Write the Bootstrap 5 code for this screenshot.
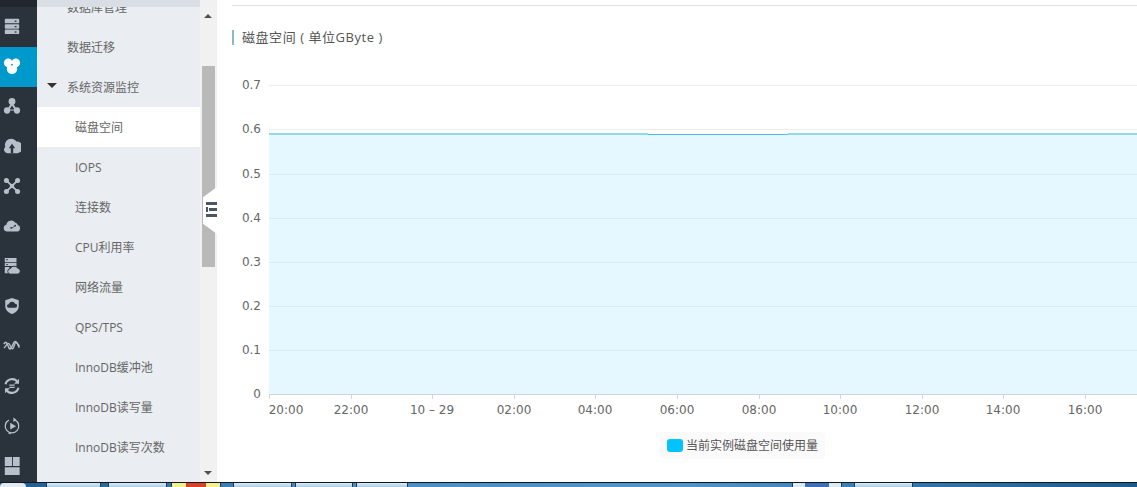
<!DOCTYPE html>
<html lang="zh-CN">
<head>
    <meta charset="UTF-8">
    <title>磁盘空间</title>
    <link href="https://cdn.jsdelivr.net/npm/bootstrap@5.3.0/dist/css/bootstrap.min.css" rel="stylesheet">
    <style>
        html, body { height: 487px; overflow: hidden; }
        body { font-family: "Open Sans", "Noto Sans CJK SC", sans-serif; font-size: 12px; color: #666; }
        .page-wrap { height: 482px; overflow: hidden; }
        .icon-rail { width: 37px; background: #2a323c; color: #b6bfca; }
        .rail-top { height: 7px; background: #22272e; }
        .rail-item { height: 40px; padding: 0 0 2px 3px; }
        .rail-item.is-on { background: #0099cc; color: #fff; }
        .rail-item svg { width: 18px; height: 18px; fill: currentColor; }
        .side-menu { width: 163px; background: #eaedf1; }
        .side-top { height: 7px; background: #d9dee4; }
        .side-scroll { height: 475px; overflow: hidden; }
        .side-list { margin-top: -20px; }
        .side-row { height: 40px; line-height: 42px; padding-left: 38px; white-space: nowrap; position: relative; }
        .side-row.is-group { padding-left: 30px; }
        .side-row.is-on { background: #fff; }
        .tree-arrow { position: absolute; left: 10px; top: 16px; width: 0; height: 0; border: 5px solid transparent; border-top: 5px solid #333; border-bottom: 0; }
        .fake-scroll { width: 17px; background: #f1f1f1; position: relative; }
        .scroll-thumb { position: absolute; left: 2px; top: 66px; width: 13px; height: 201px; background: #b9b9b9; }
        .scroll-up, .scroll-down { position: absolute; left: 4px; width: 0; height: 0; border: 4px solid transparent; }
        .scroll-up { top: 14px; border-top: 0; border-bottom: 4px solid #505050; }
        .scroll-down { top: 471px; border-bottom: 0; border-top: 4px solid #505050; }
        .side-toggle { position: absolute; left: 3px; top: 187px; width: 14px; height: 47px; background: #fff; clip-path: polygon(100% 0, 100% 100%, 0 78%, 0 22%); }
        .toggle-bars { position: absolute; left: 3px; top: 15px; width: 11px; height: 15px; fill: #4d5666; }
        .main-pane { min-width: 0; overflow: hidden; }
        .top-rule { margin: 5px 0 0 15px; height: 1px; background: #e2e2e2; }
        .pane-title { margin: 24px 0 0 15px; padding-left: 8px; height: 15px; line-height: 15px; border-left: 2px solid #8db6d3; font-size: 13px; letter-spacing: .55px; color: #555; white-space: nowrap; }
        .chart-svg { display: block; width: 920px; height: 387px; margin-top: 0; }
        .chart-svg text { font-family: "DejaVu Sans", sans-serif; font-size: 12px; fill: #666; }
        .legend-box { width: 165px; height: 27px; margin: 0 0 0 443px; background: #fafafa; border-radius: 4px; padding-left: 7px; color: #555; white-space: nowrap; }
        .legend-dot { width: 16px; height: 13px; background: #00c3ff; border-radius: 3px; margin-right: 3px; }
        .task-bar { height: 5px; display: grid; grid-template-columns: 46px 55px 7px 59px 4px 50px 12px 59px 3px 58px 3px 52px 384px 50px 12px 59px 1fr; border-top: 1px solid #10181f; background: linear-gradient(90deg, #1f5d8c, #4a8fc4 30%, #4f95cb 60%, #1d5a8c); }
        .task-orb { width: 26px; height: 4px; background: #dfeaf2; border-radius: 13px 13px 0 0; }
        .task-btn { background: linear-gradient(#dcecf6, #a9cde4); border: 1px solid #1e3c55; border-width: 0 1px; }
        .task-btn.is-warm { background: linear-gradient(90deg, #f7ef8a 30%, #d8402a 30%, #d8402a 70%, #f7ef8a 70%); }
        .task-btn.is-blue { background: linear-gradient(90deg, #dcecf6 25%, #3f6fb5 25%, #3f6fb5 75%, #dcecf6 75%); }
    </style>
</head>
<body>
    <div class="page-wrap d-flex">
        <!-- icon column -->
        <div class="icon-rail flex-shrink-0">
            <div class="rail-top"></div>
            <div class="rail-item d-flex align-items-center">
                <svg viewBox="0 0 20 20"><path d="M3 2h14a1 1 0 0 1 1 1v3a1 1 0 0 1-1 1H3a1 1 0 0 1-1-1V3a1 1 0 0 1 1-1zm0 6h14a1 1 0 0 1 1 1v3a1 1 0 0 1-1 1H3a1 1 0 0 1-1-1V9a1 1 0 0 1 1-1zm0 6h14a1 1 0 0 1 1 1v3a1 1 0 0 1-1 1H3a1 1 0 0 1-1-1v-3a1 1 0 0 1 1-1z"/><g fill="#2a323c"><rect x="13" y="4" width="2" height="1.4"/><rect x="13" y="10" width="2" height="1.4"/><rect x="13" y="16" width="2" height="1.4"/></g></svg>
            </div>
            <div class="rail-item is-on d-flex align-items-center">
                <svg viewBox="0 0 20 20"><circle cx="5.800" cy="6.500" r="4.800"/><circle cx="14.200" cy="6.500" r="4.800"/><circle cx="10" cy="13" r="5.800"/><circle cx="10" cy="8.500" r="1" fill="#0099cc"/></svg>
            </div>
            <div class="rail-item d-flex align-items-center">
                <svg viewBox="0 0 20 20"><circle cx="10" cy="5" r="3.800"/><circle cx="4.500" cy="15" r="3.500"/><circle cx="15.500" cy="15" r="3.500"/><path d="M9 7l-5 8h12l-5-8h-2zm1 2.500L12.800 14H7.200z"/></svg>
            </div>
            <div class="rail-item d-flex align-items-center">
                <svg viewBox="0 0 20 20"><path d="M5 18a4 4 0 0 1-2.500-7A7 7 0 0 1 15 5a5.500 5.500 0 0 1 1 13z"/><path fill="#2a323c" d="M10 7.500l-3.500 5h2.200V18h2.600v-5.500h2.200z"/></svg>
            </div>
            <div class="rail-item d-flex align-items-center">
                <svg viewBox="0 0 20 20"><circle cx="3.800" cy="3.800" r="2.800"/><circle cx="16.200" cy="3.800" r="2.800"/><circle cx="3.800" cy="16.200" r="2.800"/><circle cx="16.200" cy="16.200" r="2.800"/><circle cx="10" cy="10" r="2.500"/><path d="M4.700 3.300L10 8.600l5.300-5.300 1.400 1.400L11.400 10l5.300 5.300-1.400 1.400L10 11.400l-5.300 5.300-1.400-1.400L8.600 10 3.300 4.700z"/></svg>
            </div>
            <div class="rail-item d-flex align-items-center">
                <svg viewBox="0 0 20 20"><path d="M4.500 16a3.700 3.700 0 0 1-.8-7.300A5.500 5.500 0 0 1 13.500 6a4 4 0 0 1 3 3 3.600 3.600 0 0 1-.5 7z"/><g fill="#2a323c"><circle cx="9" cy="12" r="1"/><circle cx="13.500" cy="9.500" r="1"/><path d="M9 12.500l4.500-3 .4.600-4.500 3z"/></g></svg>
            </div>
            <div class="rail-item d-flex align-items-center">
                <svg viewBox="0 0 20 20"><path d="M2 1h13v4.500H2zm0 5.500h13V10H2zM2 11h5v7H2z"/><path stroke="#2a323c" d="M8.500 19a3 3 0 0 1-.5-6A4.800 4.800 0 0 1 16.500 12.500 3.300 3.300 0 0 1 16.500 19z"/><g fill="#2a323c"><rect x="3.500" y="2.500" width="2" height="1"/><rect x="3.500" y="8" width="2" height="1"/></g></svg>
            </div>
            <div class="rail-item d-flex align-items-center">
                <svg viewBox="0 0 20 20"><path d="M10 1l7.500 2.500V10c0 4.500-3.200 7.600-7.500 9-4.300-1.400-7.500-4.500-7.500-9V3.500z"/><path fill="#2a323c" d="M6.500 12a2 2 0 0 1-.2-4A3.800 3.800 0 0 1 13.500 7.600 2.200 2.200 0 0 1 13.500 12z"/></svg>
            </div>
            <div class="rail-item d-flex align-items-center">
                <svg viewBox="0 0 20 20"><path fill="none" stroke="currentColor" stroke-width="1.700" d="M1 8c1.500-3 3-3 4 0s1.800 6 3.500 5 3-8 5-8 2.500 4 5 5"/><path fill="none" stroke="currentColor" stroke-width="1.500" d="M1 12c2-1 3-5 5-5s2.500 6 4.500 6 2-7 4-7 2 3 3.500 6"/></svg>
            </div>
            <div class="rail-item d-flex align-items-center">
                <svg viewBox="0 0 20 20"><path fill="none" stroke="currentColor" stroke-width="2.400" d="M2.800 8A7.500 7.500 0 0 1 16.200 5.500M17.200 12A7.500 7.500 0 0 1 3.800 14.500"/><path d="M17.800 2v5.500h-5.500zM2.200 18v-5.500h5.500z"/><path d="M7 8.300h6v1.400H7zm0 2.600h6v1.400H7z"/></svg>
            </div>
            <div class="rail-item d-flex align-items-center">
                <svg viewBox="0 0 20 20"><path fill="none" stroke="currentColor" stroke-width="1.400" d="M13.500 3.500A7.500 7.500 0 1 1 6.500 3.500"/><path d="M11.500 .5v5l3.500-2.500zM8 6.500v7.500l6.500-3.800z"/><path d="M8.500 19.500v-3l-3 1.500z"/></svg>
            </div>
            <div class="rail-item d-flex align-items-center">
                <svg viewBox="0 0 20 20"><path d="M2 0h8v10H2zm9 0h7.500v10H11zM2 11.500h16.500V20H2z"/></svg>
            </div>
        </div>

        <!-- tree menu -->
        <div class="side-menu flex-shrink-0">
            <div class="side-top"></div>
            <div class="side-scroll">
                <div class="side-list">
                    <div class="side-row is-group">数据库管理</div>
                    <div class="side-row is-group">数据迁移</div>
                    <div class="side-row is-group"><span class="tree-arrow"></span>系统资源监控</div>
                    <div class="side-row is-on">磁盘空间</div>
                    <div class="side-row">IOPS</div>
                    <div class="side-row">连接数</div>
                    <div class="side-row">CPU利用率</div>
                    <div class="side-row">网络流量</div>
                    <div class="side-row">QPS/TPS</div>
                    <div class="side-row">InnoDB缓冲池</div>
                    <div class="side-row">InnoDB读写量</div>
                    <div class="side-row">InnoDB读写次数</div>
                </div>
            </div>
        </div>

        <div class="fake-scroll flex-shrink-0">
            <div class="scroll-up"></div>
            <div class="scroll-thumb"></div>
            <div class="scroll-down"></div>
            <div class="side-toggle">
                <svg class="toggle-bars" viewBox="0 0 11 15"><path d="M0 0h11v3H0zM3 6h8v3H3zM0 12h11v3H0z"/><path d="M0 5h2v5H0z"/></svg>
            </div>
        </div>

        <!-- chart -->
        <div class="main-pane flex-grow-1">
            <div class="top-rule"></div>
            <div class="pane-title">磁盘空间 ( 单位GByte )</div>
            <svg class="chart-svg" id="chart" viewBox="217 45 920 387"></svg>
            <div class="legend-box d-flex align-items-center">
                <span class="legend-dot"></span>当前实例磁盘空间使用量
            </div>
        </div>
    </div>

    <!-- taskbar strip -->
    <div class="task-bar">
        <div><div class="task-orb"></div></div>
        <div class="task-btn"></div><div></div>
        <div class="task-btn"></div><div></div>
        <div class="task-btn is-warm"></div><div></div>
        <div class="task-btn"></div><div></div>
        <div class="task-btn"></div><div></div>
        <div class="task-btn"></div><div></div>
        <div class="task-btn is-blue"></div><div></div>
        <div class="task-btn"></div>
    </div>

    <script>
        var svg = document.getElementById("chart");
        var html = "";
        var y0 = 394, stepY = 44.1, left = 269, right = 1137;
        for (var i = 0; i <= 7; i++) {
            var y = Math.round(y0 - i * stepY) + 0.5;
            if (i > 0) html += '<line x1="' + left + '" x2="' + right + '" y1="' + y + '" y2="' + y + '" stroke="#eeeeee"/>';
            html += '<text x="261" y="' + (y + 3) + '" text-anchor="end">' + (i === 0 ? "0" : "0." + i) + '</text>';
        }
        // area and line, grid stays faintly visible through the fill
        html += '<rect x="' + left + '" y="134" width="' + (right - left) + '" height="260" fill="#e5f8ff"/>';
        for (var j = 1; j <= 5; j++) {
            var gy = Math.round(y0 - j * stepY) + 0.5;
            html += '<line x1="' + left + '" x2="' + right + '" y1="' + gy + '" y2="' + gy + '" stroke="#d8ecf3"/>';
        }
        html += '<rect x="' + left + '" y="133" width="379" height="2" fill="#8ddbea"/>';
        html += '<rect x="648" y="134" width="140" height="1" fill="#45bfe0"/>';
        html += '<rect x="788" y="133" width="349" height="2" fill="#8ddbea"/>';
        html += '<line x1="' + left + '" x2="' + right + '" y1="394.5" y2="394.5" stroke="#cfd5de"/>';
        var labels = ["20:00", "22:00", "10 – 29", "02:00", "04:00", "06:00", "08:00", "10:00", "12:00", "14:00", "16:00"];
        labels.forEach(function (t, k) {
            var x = Math.round(269 + k * 81.6);
            html += '<line x1="' + (x + 0.5) + '" x2="' + (x + 0.5) + '" y1="394" y2="399" stroke="#cfd5de"/>';
            var tx = k === 0 ? 286 : x;
            html += '<text x="' + tx + '" y="414" text-anchor="middle">' + t + '</text>';
        });
        svg.innerHTML = html;
    </script>
    <script src="https://cdn.jsdelivr.net/npm/bootstrap@5.3.0/dist/js/bootstrap.bundle.min.js"></script>
</body>
</html>
